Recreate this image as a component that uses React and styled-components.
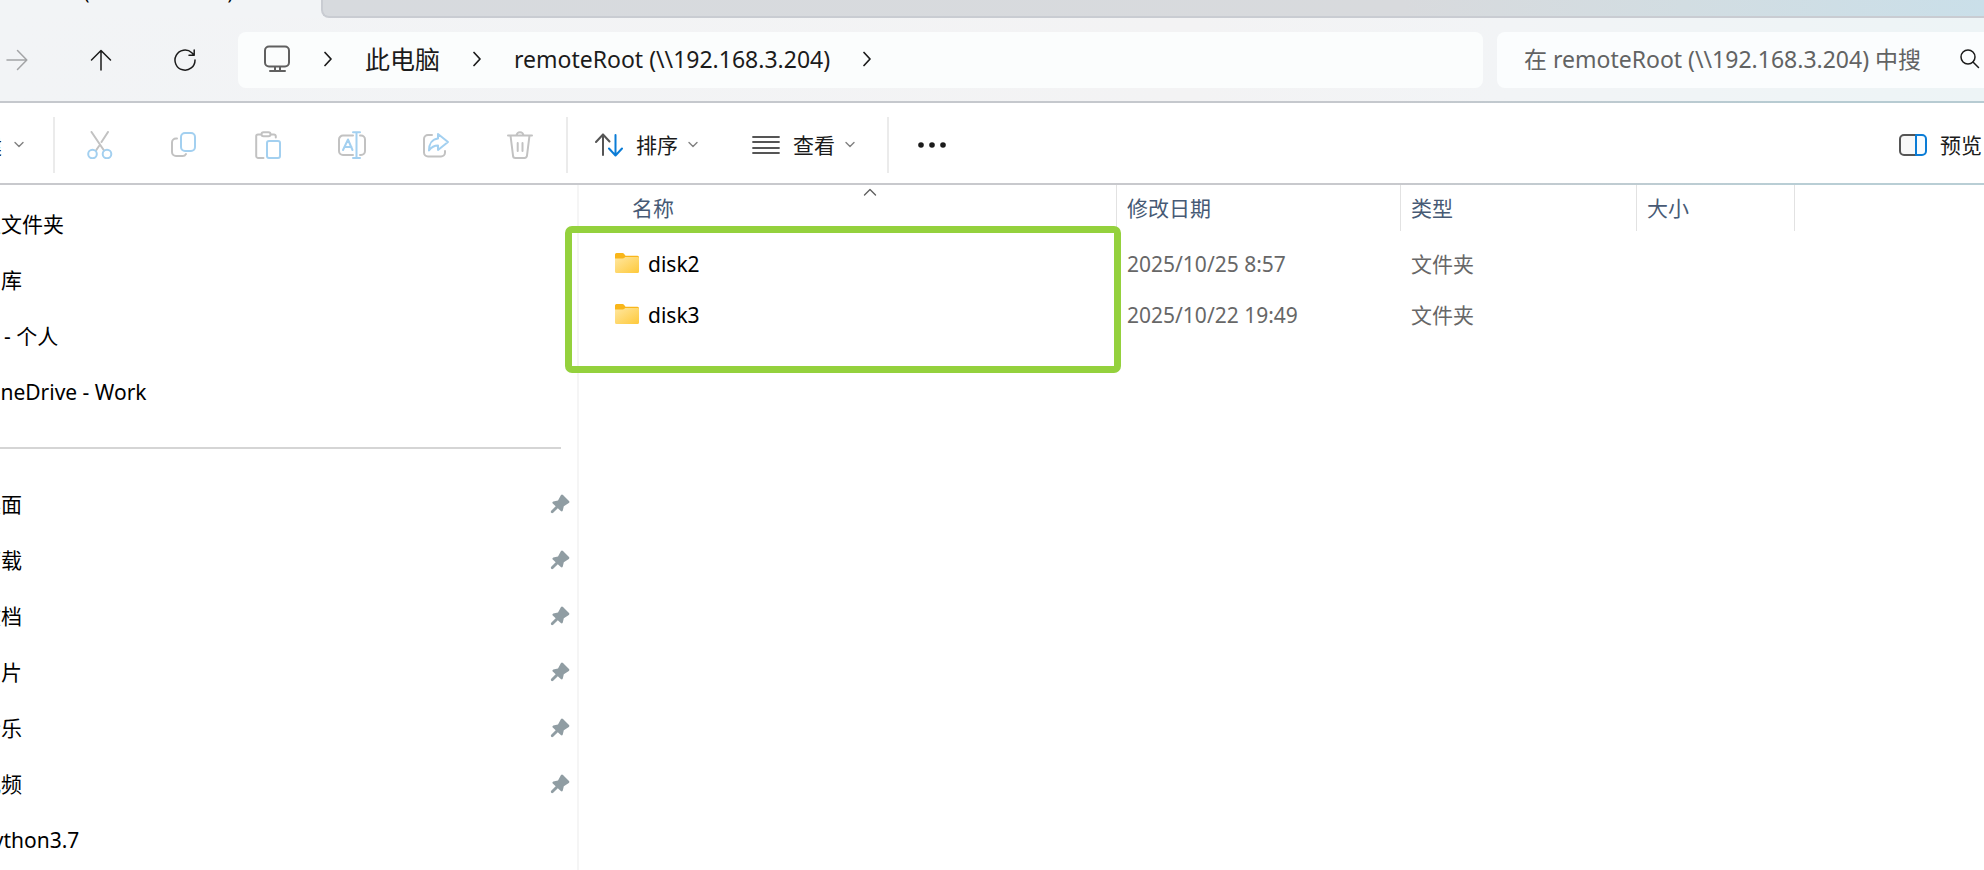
import React from "react";
import styled, { createGlobalStyle } from "styled-components";

const GlobalStyle = createGlobalStyle`
  * { box-sizing: border-box; }
  html, body { margin: 0; overflow: hidden; }
  body, button, input, table {
    font-family: "Noto Sans", "Noto Sans CJK SC", sans-serif;
    font-size: 21px;
    color: #000;
  }
  button {
    background: none;
    border: 0;
    padding: 0;
    margin: 0;
  }
`;

const Explorer = styled.div`
  display: flex;
  flex-direction: column;
  min-height: 100vh;
  overflow: hidden;
  background: #fff;
`;

const TitleBar = styled.header`
  display: flex;
  height: 18px;
  overflow: hidden;
  background: #f2f4f6;
`;

const ActiveTab = styled.div`
  display: flex;
  align-items: flex-end;
  width: 321px;
  flex: none;
  padding-bottom: 14px;
  overflow: hidden;
`;

const TabTitle = styled.span`
  margin-left: -28px;
  font-size: 19px;
  line-height: 24px;
  white-space: nowrap;
`;

const TabStrip = styled.div`
  flex: 1;
  border: solid #c9ccd2;
  border-width: 0 0 2px 2px;
  border-bottom-left-radius: 8px;
  background: linear-gradient(90deg, #d7dade 0%, #d8dadd 65%, #d2dde2 82%, #cadfe9 100%);
`;

const NavBar = styled.nav`
  display: flex;
  align-items: center;
  height: 85px;
  border-bottom: 2px solid #c5c8cd;
  border-image: linear-gradient(90deg, #c5c8cd 0%, #c5c8cd 70%, #b7cbd2 90%, #b7cbd2 100%) 1;
  background: linear-gradient(90deg, #f2f4f6 0%, #f3f3f4 60%, #f2f4f6 76%, #edf4f6 100%);
`;

const NavButtons = styled.div`
  display: flex;
  margin: 0 11px 0 -25px;
`;

const NavButton = styled.button`
  display: grid;
  place-items: center;
  width: 84px;
  height: 56px;
  color: ${(p) => (p.disabled ? "#a3a4a6" : "#1b1b1b")};
`;

const AddressBar = styled.div`
  display: flex;
  align-items: center;
  gap: 33px;
  flex: 1;
  height: 56px;
  padding-left: 25px;
  padding-bottom: 2px;
  border-radius: 8px;
  background: #fbfdfd;
  color: #1b1b1b;
`;

const Crumb = styled.button`
  font-size: ${(p) => (p.$cjk ? 25 : 23)}px;
  line-height: 32px;
  color: #1b1b1b;
  white-space: nowrap;
`;

const SearchBox = styled.label`
  display: flex;
  align-items: center;
  gap: 35px;
  width: 500px;
  height: 56px;
  margin: 0 -13px 0 14px;
  padding-left: 27px;
  padding-bottom: 2px;
  border-radius: 8px;
  background: #fbfdfe;
  color: #1b1b1b;
`;

const SearchInput = styled.input`
  width: 401px;
  height: 40px;
  padding: 0;
  border: 0;
  outline: 0;
  background: transparent;
  font-size: 23px;
  &::placeholder { color: #626363; opacity: 1; }
`;

const Toolbar = styled.div`
  display: flex;
  align-items: center;
  height: 82px;
  padding-top: 3px;
  border-bottom: 2px solid #c8c9cd;
  border-image: linear-gradient(90deg, #c8c9cd 0%, #c8c9cd 70%, #b9ced5 90%, #b9ced5 100%) 1;
  overflow: hidden;
`;

const NewButton = styled.button`
  display: flex;
  align-items: center;
  gap: 12px;
  width: 53px;
  flex: none;
  margin-left: -19px;
  margin-right: 19px;
`;

const Divider = styled.span`
  flex: none;
  width: 2px;
  height: 56px;
  background: #ebebeb;
`;

const ToolGroup = styled.div`
  display: flex;
  padding: 0 4px 0 3px;
`;

const ToolButton = styled.button`
  display: grid;
  place-items: center;
  width: 84px;
  height: 56px;
`;

const MenuGroup = styled.div`
  display: flex;
  gap: 54px;
  padding: 0 32px 0 27px;
`;

const MenuButton = styled.button`
  display: flex;
  align-items: center;
  gap: 10px;
  height: 56px;
  line-height: 28px;
  white-space: nowrap;
  color: #1b1b1b;
`;

const MenuLabel = styled.span`
  margin-left: 3px;
`;

const PreviewButton = styled(MenuButton)`
  width: 85px;
  margin-left: auto;
  flex: none;
`;

const Body = styled.div`
  display: flex;
  flex: 1;
`;

const Sidebar = styled.aside`
  flex: none;
  width: 579px;
  padding-top: 11px;
  border-right: 2px solid #f5f5f5;
  overflow: hidden;
`;

const TreeItem = styled.a`
  display: flex;
  align-items: center;
  justify-content: space-between;
  height: 56px;
  padding-right: 7px;
  margin-left: ${(p) => p.$indent ?? -20}px;
  line-height: 28px;
  color: #000;
  text-decoration: none;
  white-space: nowrap;
`;

const Rule = styled.hr`
  height: 2px;
  margin: 27px 16px 27px 0;
  border: 0;
  background: #d5d5d5;
`;

const Content = styled.main`
  position: relative;
  flex: 1;
  min-width: 0;
`;

const FileTable = styled.table`
  width: 100%;
  table-layout: fixed;
  border-collapse: collapse;
  text-align: left;
`;

const HeadCell = styled.th`
  width: ${(p) => p.$width};
  padding: 0 0 7px;
  font-weight: 400;
`;

const HeadLabel = styled.div`
  position: relative;
  display: flex;
  align-items: center;
  height: 46px;
  padding-left: ${(p) => (p.$first ? 53 : 10)}px;
  border-right: ${(p) => (p.$last ? "0" : "1px solid #e2e2e2")};
  line-height: 28px;
  color: #475a75;
`;

const SortMark = styled.span`
  position: absolute;
  top: 3px;
  left: 45px;
  right: 0;
  display: flex;
  justify-content: center;
  line-height: 0;
`;

const Cell = styled.td`
  height: 51px;
  padding: 0 0 0 10px;
  line-height: 28px;
  color: #676767;
`;

const NameCell = styled(Cell)`
  padding-left: 35px;
`;

const FileName = styled.a`
  display: flex;
  align-items: center;
  gap: 8px;
  color: #000;
  text-decoration: none;
`;

const Highlight = styled.div`
  position: absolute;
  top: 41px;
  left: -14px;
  width: 556px;
  height: 147px;
  border: 7px solid #94d13d;
  border-radius: 7px;
  pointer-events: none;
`;

const Icon = ({ w = 28, h = 28, sw = 2, color = "currentColor", children }) => (
  <svg width={w} height={h} viewBox={`0 0 ${w} ${h}`} fill="none" stroke={color} strokeWidth={sw} strokeLinecap="round" strokeLinejoin="round" aria-hidden="true">
    {children}
  </svg>
);

const GREY = "#c2c2c2";
const BLUE = "#a3d0f0";

const ChevronRight = () => (
  <Icon w={8} h={16} sw={1.7}><path d="M1 1.5 7 8 1 14.5" /></Icon>
);
const ChevronDown = () => (
  <Icon w={10} h={8} sw={1.4} color="#808080"><path d="M1 1.5 5 5.5 9 1.5" /></Icon>
);
const Forward = () => (
  <Icon w={22} h={22} sw={1.5}><path d="M1 11H20.500M11.500 1.500 20.800 11 11.500 20.500" /></Icon>
);
const Up = () => (
  <Icon w={22} h={22} sw={1.5}><path d="M11 21V1.500M1.500 11 11 1.500 20.500 11" /></Icon>
);
const Refresh = () => (
  <Icon w={22} h={22} sw={1.5}>
    <path d="M21 11A10 10 0 1 1 17.800 3.800L20 6M20.200 1V6.300H15" />
  </Icon>
);
const Monitor = () => (
  <Icon color="#606060">
    <rect x="2" y="1.500" width="24" height="20" rx="4" />
    <path d="M12 22V26M17 22V26M7 26H22" />
  </Icon>
);
const Search = () => (
  <Icon w={20} h={20} sw={1.5}><circle cx="8" cy="8" r="7" /><path d="M13 13 18.500 18.500" /></Icon>
);
const Cut = () => (
  <Icon color={GREY}>
    <path d="M5.500 1 18 19.500M22 1 15.500 11M13 15 10 19.500" />
    <g stroke={BLUE}><circle cx="6.500" cy="23" r="4.300" /><circle cx="21" cy="23" r="4.300" /></g>
  </Icon>
);
const Copy = () => (
  <Icon color={GREY}>
    <path d="M7 7.500H6A4 4 0 0 0 2 11.500V21A4 4 0 0 0 6 25H12A4 4 0 0 0 16 23" />
    <rect x="11" y="2" width="14" height="18" rx="4" stroke={BLUE} />
  </Icon>
);
const Paste = () => (
  <Icon color={GREY}>
    <path d="M7 3.500H4A1.800 1.800 0 0 0 2.200 5.300V25A2 2 0 0 0 4.200 27H9.500M17 3.500H20A1.800 1.800 0 0 1 21.800 5.300V6.500" />
    <rect x="7.500" y="1.300" width="9" height="4" rx="2" />
    <rect x="13" y="10" width="13" height="17" rx="2" stroke={BLUE} />
  </Icon>
);
const Rename = () => (
  <Icon color={GREY}>
    <path d="M15 4.500H5A4 4 0 0 0 1 8.500V20A4 4 0 0 0 5 24H15M22 4.500H23A4 4 0 0 1 27 8.500V20A4 4 0 0 1 23 24H22" />
    <path stroke={BLUE} d="M15 1.200H22M15 27H22M18.500 1.200V27M5 19 10 8.500 14.500 19M6.500 16H13.500" />
  </Icon>
);
const Share = () => (
  <Icon color={GREY}>
    <path d="M10 4H6A4 4 0 0 0 2 8V21.500A4 4 0 0 0 6 25.500H19A4 4 0 0 0 23 21.500V20" />
    <path stroke={BLUE} d="M16 3 26 11 16 19V14.500C12 14.500 9.500 16 7 19.500 7 12.500 10.500 8 16 7.500Z" />
  </Icon>
);
const Trash = () => (
  <Icon color={GREY}>
    <path d="M2 4.500H26M4.500 4.500 7 24.500A2.500 2.500 0 0 0 9.500 27H18.500A2.500 2.500 0 0 0 21 24.500L23.500 4.500M10.500 4.500A3.500 3.300 0 0 1 17.500 4.500M11.700 12V20M16.500 12V20" />
  </Icon>
);
const Sort = () => (
  <Icon color="#555">
    <path d="M8 24V3.500M1 11 8 3.500 14.500 10.500" />
    <path stroke="#0a7cd6" d="M20.500 4V24M14 17.500 20.500 24.500 27 17.500" />
  </Icon>
);
const View = () => (
  <Icon color="#555" sw={1.8}><path d="M1 6H27M1 11H27M1 17H27M1 22H27" /></Icon>
);
const More = () => (
  <Icon w={30}>
    <g fill="#1b1b1b" stroke="none"><circle cx="5" cy="14" r="2.800" /><circle cx="16" cy="14" r="2.800" /><circle cx="27" cy="14" r="2.800" /></g>
  </Icon>
);
const PreviewPane = () => (
  <Icon color="#555">
    <path fill="#f8f8f8" d="M17 4H5A4 4 0 0 0 1 8V20A4 4 0 0 0 5 24H17" />
    <path stroke="#0a7cd6" fill="#f8fcff" d="M17 4H23A4 4 0 0 1 27 8V20A4 4 0 0 1 23 24H17Z" />
  </Icon>
);
const Pin = () => (
  <svg width="20" height="20" viewBox="0 0 20 20" fill="#909da3" aria-hidden="true">
    <path d="M11 1 Q12 0 13 1L19 7Q20 8.200 18.800 9L13.800 12.300 12.800 16.500Q12 18 10.800 17L7.800 14.200 3.200 18.800Q2 19.600 1.200 18.800 .4 18 1.200 16.800L5.700 12.200 2.500 9.200Q2 7.800 3.300 7.400L8 6.400Z" />
  </svg>
);
const Folder = () => (
  <svg width="26" height="24" viewBox="0 0 26 24" aria-hidden="true">
    <defs>
      <linearGradient id="folderFront" x1="0" y1="0" x2="1" y2="1">
        <stop offset="0" stopColor="#ffe7a0" />
        <stop offset="1" stopColor="#fec93a" />
      </linearGradient>
    </defs>
    <path fill="#f9b61a" d="M1 2.500Q1 1 2.500 1H8.500Q9.500 1 10.200 2L11.500 3.800H23.500Q25 3.800 25 5.300V10H1Z" />
    <path fill="url(#folderFront)" d="M1 6.500H8.700Q9.700 6.500 10.400 5.800L11.200 5H24Q25 5 25 6V19.500Q25 21 23.500 21H2.500Q1 21 1 19.500Z" />
  </svg>
);

const tools = [
  ["剪切", Cut],
  ["复制", Copy],
  ["粘贴", Paste],
  ["重命名", Rename],
  ["共享", Share],
  ["删除", Trash],
];

const roots = [
  { name: "主文件夹" },
  { name: "图库" },
  { name: "- 个人", indent: 4 },
  { name: "OneDrive - Work", indent: -16 },
];

const quickAccess = [
  { name: "桌面", pinned: true },
  { name: "下载", pinned: true },
  { name: "文档", pinned: true },
  { name: "图片", pinned: true },
  { name: "音乐", pinned: true },
  { name: "视频", pinned: true },
  { name: "Python3.7" },
];

const files = [
  { name: "disk2", date: "2025/10/25 8:57", type: "文件夹" },
  { name: "disk3", date: "2025/10/22 19:49", type: "文件夹" },
];

const renderItem = (item) => (
  <TreeItem key={item.name} href="#" $indent={item.indent}>
    {item.name}
    {item.pinned && <Pin />}
  </TreeItem>
);

export default function App() {
  return (
    <Explorer>
      <GlobalStyle />
      <TitleBar>
        <ActiveTab><TabTitle>{"remoteRoot (\\\\192.168.3.204)"}</TabTitle></ActiveTab>
        <TabStrip />
      </TitleBar>

      <NavBar>
        <NavButtons>
          <NavButton disabled aria-label="前进"><Forward /></NavButton>
          <NavButton aria-label="向上"><Up /></NavButton>
          <NavButton aria-label="刷新"><Refresh /></NavButton>
        </NavButtons>
        <AddressBar>
          <Monitor />
          <ChevronRight />
          <Crumb $cjk>此电脑</Crumb>
          <ChevronRight />
          <Crumb>{"remoteRoot (\\\\192.168.3.204)"}</Crumb>
          <ChevronRight />
        </AddressBar>
        <SearchBox>
          <SearchInput type="text" aria-label="搜索" placeholder={"在 remoteRoot (\\\\192.168.3.204) 中搜"} />
          <Search />
        </SearchBox>
      </NavBar>

      <Toolbar>
        <NewButton>建<ChevronDown /></NewButton>
        <Divider />
        <ToolGroup>
          {tools.map(([label, Glyph]) => (
            <ToolButton key={label} aria-label={label}><Glyph /></ToolButton>
          ))}
        </ToolGroup>
        <Divider />
        <MenuGroup>
          <MenuButton><Sort /><MenuLabel>排序</MenuLabel><ChevronDown /></MenuButton>
          <MenuButton><View /><MenuLabel>查看</MenuLabel><ChevronDown /></MenuButton>
        </MenuGroup>
        <Divider />
        <ToolButton aria-label="更多"><More /></ToolButton>
        <PreviewButton><PreviewPane /><MenuLabel>预览</MenuLabel></PreviewButton>
      </Toolbar>

      <Body>
        <Sidebar>
          {roots.map(renderItem)}
          <Rule />
          {quickAccess.map(renderItem)}
        </Sidebar>
        <Content>
          <FileTable>
            <thead>
              <tr>
                <HeadCell $width="538px">
                  <HeadLabel $first>
                    名称
                    <SortMark>
                      <Icon w={14} h={8} sw={1.4} color="#606060"><path d="M1.500 7 7 1.500 12.500 7" /></Icon>
                    </SortMark>
                  </HeadLabel>
                </HeadCell>
                <HeadCell $width="284px"><HeadLabel>修改日期</HeadLabel></HeadCell>
                <HeadCell $width="236px"><HeadLabel>类型</HeadLabel></HeadCell>
                <HeadCell $width="158px"><HeadLabel>大小</HeadLabel></HeadCell>
                <HeadCell $width="auto"><HeadLabel $last /></HeadCell>
              </tr>
            </thead>
            <tbody>
              {files.map((f) => (
                <tr key={f.name}>
                  <NameCell><FileName href="#"><Folder />{f.name}</FileName></NameCell>
                  <Cell>{f.date}</Cell>
                  <Cell>{f.type}</Cell>
                  <Cell />
                  <Cell />
                </tr>
              ))}
            </tbody>
          </FileTable>
          <Highlight />
        </Content>
      </Body>
    </Explorer>
  );
}
